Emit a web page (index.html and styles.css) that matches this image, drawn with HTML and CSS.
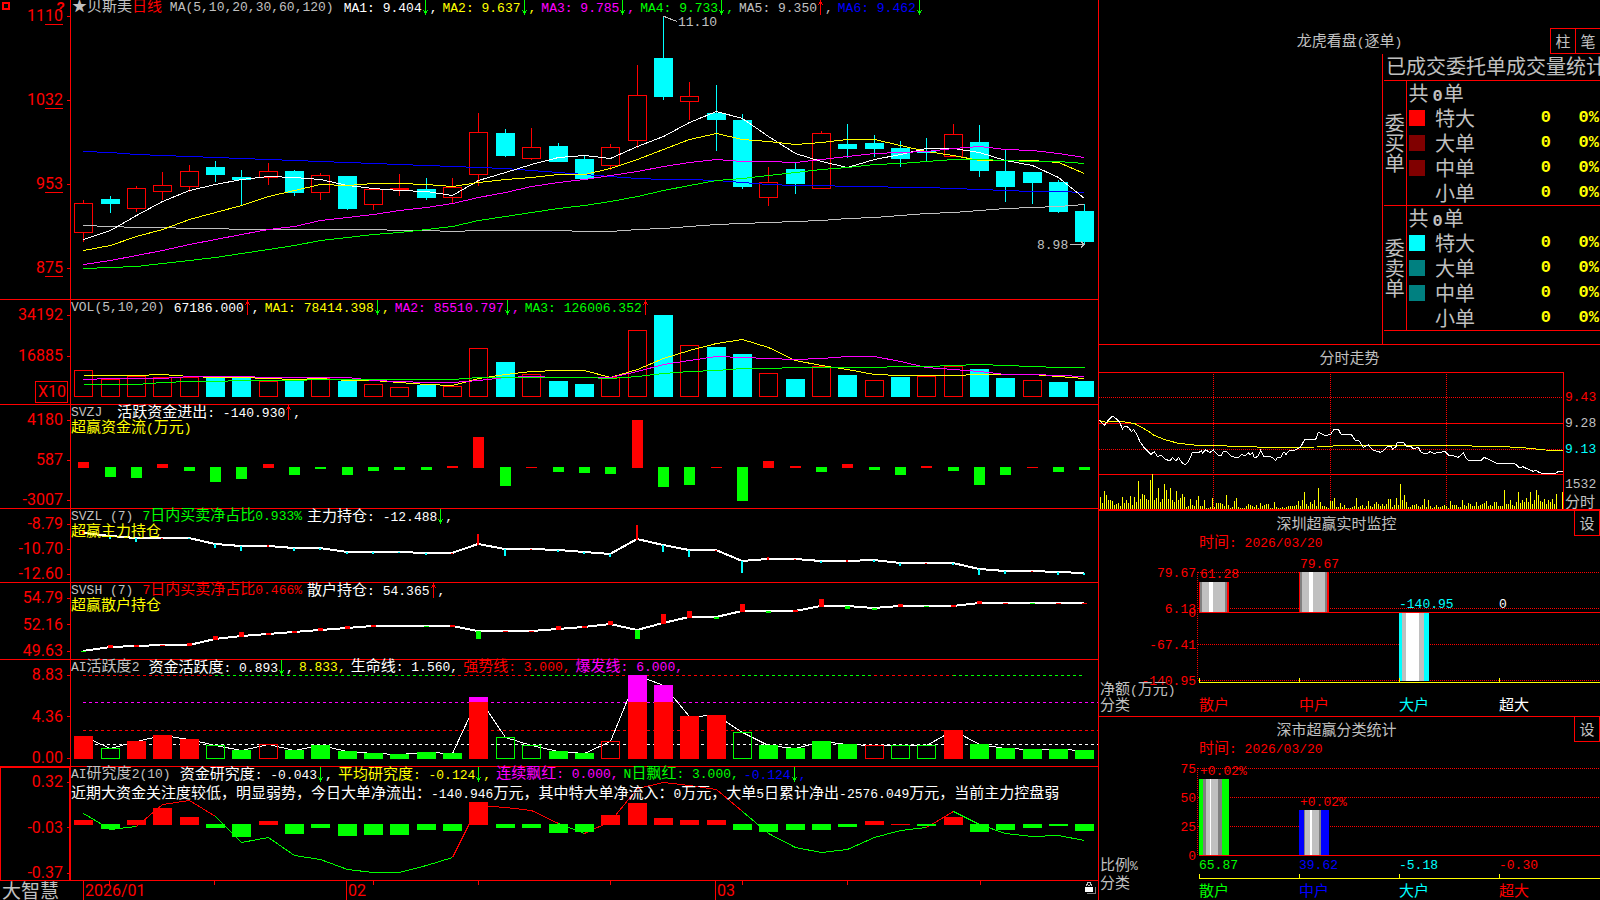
FILE: index.html
```html
<!DOCTYPE html>
<html lang="zh-CN">
<head>
<meta charset="utf-8">
<title>贝斯美 日线 - 大智慧</title>
<link rel="stylesheet" href="styles.css">
</head>
<body>
<svg class="defs" aria-hidden="true">
  <symbol id="up" viewBox="0 0 5 15"><path d="M2 0h1v15h-1zM1 2h3v2h-3zM0 4h1v1h-1zM4 4h1v1h-1z"/></symbol>
  <symbol id="down" viewBox="0 0 5 15"><path d="M2 0h1v15h-1zM1 11h3v2h-3zM0 10h1v1h-1zM4 10h1v1h-1z"/></symbol>
</svg>
<div class="screen">
  <main class="charts">
    <section class="panel">
      <div class="axis wide-end">
        <span class="mark"></span><span class="hint">?</span>
        <span class="lab"><span>11<u>10</u></span></span><span class="lab"><span>10<u>32</u></span></span><span class="lab"><span>9<u>53</u></span></span><span class="lab"><span>8<u>75</u></span></span>
      </div>
      <div class="plot">
        <svg id="kline" viewBox="71 0 1027 299" preserveAspectRatio="none"></svg>
        <div class="heads"><div class="head">
          <span class="silver name"><span class="zh">★贝斯美<span class="red">日线</span></span> MA(5,10,20,30,60,120)</span>
          <span class="white">MA1: 9.404<svg class="arr green"><use href="#down"/></svg>,</span>
          <span class="yellow">MA2: 9.637<svg class="arr green"><use href="#down"/></svg>,</span>
          <span class="magenta">MA3: 9.785<svg class="arr green"><use href="#down"/></svg>,</span>
          <span class="green">MA4: 9.733<svg class="arr green"><use href="#down"/></svg>,</span>
          <span class="silver">MA5: 9.350<svg class="arr red"><use href="#up"/></svg>,</span>
          <span class="blue">MA6: 9.462<svg class="arr green"><use href="#down"/></svg></span>
        </div></div>
      </div>
    </section>
    <section class="panel">
      <div class="axis vol">
        <span class="lab">34192</span><span class="lab">16885</span><span class="unit">X10</span>
      </div>
      <div class="plot">
        <svg id="volume" viewBox="71 300 1027 104" preserveAspectRatio="none"></svg>
        <div class="heads"><div class="head">
          <span class="silver title">VOL(5,10,20)</span>
          <span class="white">67186.000<svg class="arr red"><use href="#up"/></svg>,</span>
          <span class="yellow">MA1: 78414.398<svg class="arr green"><use href="#down"/></svg>,</span>
          <span class="magenta">MA2: 85510.797<svg class="arr green"><use href="#down"/></svg>,</span>
          <span class="green">MA3: 126006.352<svg class="arr red"><use href="#up"/></svg></span>
        </div></div>
      </div>
    </section>
    <section class="panel">
      <div class="axis"><span class="lab">4180</span><span class="lab">587</span><span class="lab">-3007</span></div>
      <div class="plot">
        <svg id="flow" viewBox="71 405 1027 103" preserveAspectRatio="none"></svg>
        <div class="heads"><div class="head">
          <span class="silver title gap">SVZJ</span>
          <span class="white"><span class="zh">活跃资金进出</span>: -140.930<svg class="arr red"><use href="#up"/></svg>,</span>
        </div>
        <div class="sub yellow"><span class="zh">超赢资金流</span>(<span class="zh">万元</span>)</div></div>
      </div>
    </section>
    <section class="panel">
      <div class="axis"><span class="lab">-8.79</span><span class="lab">-10.70</span><span class="lab">-12.60</span></div>
      <div class="plot">
        <svg id="main-hold" viewBox="71 509 1027 73" preserveAspectRatio="none"></svg>
        <div class="heads"><div class="head">
          <span class="silver title">SVZL (7)</span>
          <span class="green">7<span class="zh">日内买卖净占比</span>0.933%</span>
          <span class="white"><span class="zh">主力持仓</span>: -12.488<svg class="arr green"><use href="#down"/></svg>,</span>
        </div>
        <div class="sub yellow"><span class="zh">超赢主力持仓</span></div></div>
      </div>
    </section>
    <section class="panel">
      <div class="axis"><span class="lab">54.79</span><span class="lab">52.16</span><span class="lab">49.63</span></div>
      <div class="plot">
        <svg id="retail-hold" viewBox="71 583 1027 76" preserveAspectRatio="none"></svg>
        <div class="heads"><div class="head">
          <span class="silver title">SVSH (7)</span>
          <span class="red">7<span class="zh">日内买卖净占比</span>0.466%</span>
          <span class="white"><span class="zh">散户持仓</span>: 54.365<svg class="arr red"><use href="#up"/></svg>,</span>
        </div>
        <div class="sub yellow"><span class="zh">超赢散户持仓</span></div></div>
      </div>
    </section>
    <section class="panel">
      <div class="axis"><span class="lab">8.83</span><span class="lab">4.36</span><span class="lab">0.00</span></div>
      <div class="plot">
        <svg id="active" viewBox="71 660 1027 106" preserveAspectRatio="none"></svg>
        <div class="heads"><div class="head">
          <span class="silver title">AI<span class="zh">活跃度</span>2</span>
          <span class="white"><span class="zh">资金活跃度</span>: 0.893<svg class="arr green"><use href="#down"/></svg>,</span>
          <span class="yellow">8.833,</span>
          <span class="white"><span class="zh">生命线</span>: 1.560,</span>
          <span class="red"><span class="zh">强势线</span>: 3.000,</span>
          <span class="magenta"><span class="zh">爆发线</span>: 6.000,</span>
        </div></div>
      </div>
    </section>
    <section class="panel last">
      <div class="axis boxed"><span class="lab">0.32</span><span class="lab">-0.03</span><span class="lab">-0.37</span></div>
      <div class="plot">
        <svg id="research" viewBox="71 767 1027 113" preserveAspectRatio="none"></svg>
        <div class="heads"><div class="head">
          <span class="silver title">AI<span class="zh">研究度</span>2(10)</span>
          <span class="white"><span class="zh">资金研究度</span>: -0.043<svg class="arr green"><use href="#down"/></svg>,</span>
          <span class="yellow"><span class="zh">平均研究度</span>: -0.124<svg class="arr green"><use href="#down"/></svg>,</span>
          <span class="magenta"><span class="zh">连续飘红</span>: 0.000,</span>
          <span class="green">N<span class="zh">日飘红</span>: 3.000,</span>
          <span class="blue">-0.124<svg class="arr green"><use href="#down"/></svg>,</span>
        </div>
        <div class="sub note white"><span class="zh">近期大资金关注度较低，明显弱势，今日大单净流出：</span>-140.946<span class="zh">万元，其中特大单净流入：</span>0<span class="zh">万元，大单</span>5<span class="zh">日累计净出</span>-2576.049<span class="zh">万元，当前主力控盘弱</span></div></div>
      </div>
    </section>
    <footer class="timeline">
      <span class="brand">大智慧</span>
      <svg id="dates" viewBox="71 881 1027 19" preserveAspectRatio="none">
        <path class="s-red" d="M83.5 881v19M346.5 881v19M715.5 881v19M109.5 881v4M214.5 881v4M373.5 881v4M478.5 881v4M610.5 881v4M742.5 881v4M847.5 881v4M980.5 881v4"/>
        <text class="narrow" x="85" y="896">2026/01</text><text class="narrow" x="348" y="896">02</text><text class="narrow" x="717" y="896">03</text>
        <path class="f-gray" d="M1087 893h8v-6h1v7h-9z"/>
        <path class="f-white" d="M1085 887h8v5h-8z"/>
        <path class="s-silver" d="M1086.5 886v-2h1v-1.5h3v1.5h1v2M1088 885.500h2"/>
      </svg>
    </footer>
  </main>

  <aside class="side">
    <section class="orders">
      <header class="bar tall"><h2><span class="zh">龙虎看盘</span>(<span class="zh">逐单</span>)</h2><div class="btns"><button>柱</button><button>笔</button></div></header>
      <div class="book">
        <h3>已成交委托单成交量统计</h3>
        <table>
          <tbody>
            <tr><th rowspan="5" scope="rowgroup">委<br>买<br>单</th><td colspan="4" class="sum">共<b>0</b>单</td></tr>
            <tr><td><i class="sw c1"></i></td><td>特大</td><td class="num">0</td><td class="num">0%</td></tr>
            <tr><td><i class="sw c2"></i></td><td>大单</td><td class="num">0</td><td class="num">0%</td></tr>
            <tr><td><i class="sw c2"></i></td><td>中单</td><td class="num">0</td><td class="num">0%</td></tr>
            <tr><td></td><td>小单</td><td class="num">0</td><td class="num">0%</td></tr>
          </tbody>
          <tbody>
            <tr><th rowspan="5" scope="rowgroup">委<br>卖<br>单</th><td colspan="4" class="sum">共<b>0</b>单</td></tr>
            <tr><td><i class="sw c3"></i></td><td>特大</td><td class="num">0</td><td class="num">0%</td></tr>
            <tr><td><i class="sw c4"></i></td><td>大单</td><td class="num">0</td><td class="num">0%</td></tr>
            <tr><td><i class="sw c4"></i></td><td>中单</td><td class="num">0</td><td class="num">0%</td></tr>
            <tr><td></td><td>小单</td><td class="num">0</td><td class="num">0%</td></tr>
          </tbody>
        </table>
      </div>
    </section>

    <section class="intraday">
      <h2 class="zh">分时走势</h2>
      <div class="trend">
        <svg id="trend" viewBox="27 96 1395 411" preserveAspectRatio="none"></svg>
        <div class="scale"><span class="red">9.43</span><span>9.28</span><span class="cyan">9.13</span><span class="push">1532</span><span class="zh">分时</span></div>
      </div>
    </section>

    <section class="stat">
      <header class="bar"><h2 class="zh">深圳超赢实时监控</h2><button>设</button></header>
      <p class="time"><span class="zh">时间</span>: 2026/03/20</p>
      <svg viewBox="1099 552 501 164" preserveAspectRatio="none">
        <defs>
          <linearGradient id="g-red"><stop offset="3%" stop-color="red"/><stop offset="3%" stop-color="gray"/><stop offset="10%" stop-color="gray"/><stop offset="10%" stop-color="silver"/><stop offset="33%" stop-color="silver"/><stop offset="33%" stop-color="#fff"/><stop offset="47%" stop-color="#fff"/><stop offset="47%" stop-color="silver"/><stop offset="87%" stop-color="silver"/><stop offset="87%" stop-color="gray"/><stop offset="93%" stop-color="gray"/><stop offset="93%" stop-color="red"/></linearGradient>
          <linearGradient id="g-cyan"><stop offset="10%" stop-color="cyan"/><stop offset="10%" stop-color="silver"/><stop offset="23%" stop-color="silver"/><stop offset="23%" stop-color="#fff"/><stop offset="67%" stop-color="#fff"/><stop offset="67%" stop-color="silver"/><stop offset="83%" stop-color="silver"/><stop offset="83%" stop-color="cyan"/></linearGradient>
          <linearGradient id="g-green"><stop offset="13%" stop-color="lime"/><stop offset="13%" stop-color="gray"/><stop offset="23%" stop-color="gray"/><stop offset="23%" stop-color="silver"/><stop offset="37%" stop-color="silver"/><stop offset="37%" stop-color="#fff"/><stop offset="40%" stop-color="#fff"/><stop offset="40%" stop-color="silver"/><stop offset="63%" stop-color="silver"/><stop offset="63%" stop-color="gray"/><stop offset="77%" stop-color="gray"/><stop offset="77%" stop-color="lime"/></linearGradient>
          <linearGradient id="g-blue"><stop offset="17%" stop-color="blue"/><stop offset="17%" stop-color="gray"/><stop offset="20%" stop-color="gray"/><stop offset="20%" stop-color="silver"/><stop offset="37%" stop-color="silver"/><stop offset="37%" stop-color="#fff"/><stop offset="43%" stop-color="#fff"/><stop offset="43%" stop-color="silver"/><stop offset="67%" stop-color="silver"/><stop offset="67%" stop-color="gray"/><stop offset="73%" stop-color="gray"/><stop offset="73%" stop-color="blue"/></linearGradient>
        </defs>
        <path class="s-red dot" d="M1198 572.500h402M1198 608.500h402M1198 644.500h402M1198 680.500h402M1197.500 572v108"/>
        <rect fill="url(#g-red)" x="1199" y="582" width="30" height="30"/>
        <rect fill="url(#g-red)" x="1299" y="572" width="30" height="40"/>
        <rect fill="url(#g-cyan)" x="1399" y="613" width="30" height="68"/>
        <path class="s-red" d="M1199 612.500h401"/>
        <path class="s-yellow" d="M1199.500 678v4.500h400M1299.500 678v4M1399.500 678v4M1499.500 678v4"/>
        <g class="f-red end"><text x="1196" y="577">79.67</text><text x="1196" y="613">6.13</text><text x="1196" y="617">0</text><text x="1196" y="649">-67.41</text><text x="1196" y="685">-140.95</text></g>
        <text class="f-red" x="1200" y="578">61.28</text><text class="f-red" x="1300" y="568">79.67</text><text class="f-cyan" x="1399" y="608">-140.95</text><text class="f-white" x="1499" y="608">0</text>
        <g class="f-silver"><text x="1100" y="694"><tspan class="zh">净额</tspan>(<tspan class="zh">万元</tspan>)</text><text class="zh" x="1100" y="710">分类</text></g>
        <g class="zh"><text class="f-red" x="1199" y="710">散户</text><text class="f-red" x="1299" y="710">中户</text><text class="f-cyan" x="1399" y="710">大户</text><text class="f-white" x="1499" y="710">超大</text></g>
      </svg>
    </section>

    <section class="stat">
      <header class="bar"><h2 class="zh">深市超赢分类统计</h2><button>设</button></header>
      <p class="time"><span class="zh">时间</span>: 2026/03/20</p>
      <svg viewBox="1099 758 501 142" preserveAspectRatio="none">
        <path class="s-red dot" d="M1198 768.500h402M1198 797.500h402M1198 826.500h402M1197.500 768v87"/>
        <rect fill="url(#g-green)" x="1199" y="779" width="30" height="76"/>
        <rect fill="url(#g-blue)" x="1299" y="810" width="30" height="45"/>
        <path class="s-red" d="M1199 855.500h401"/>
        <path class="s-yellow" d="M1199.500 874v4.500h400M1299.500 874v4M1399.500 874v4M1499.500 874v4"/>
        <g class="f-red end"><text x="1196" y="773">75</text><text x="1196" y="802">50</text><text x="1196" y="831">25</text><text x="1196" y="860">0</text></g>
        <text class="f-red" x="1200" y="775">+0.02%</text><text class="f-red" x="1300" y="806">+0.02%</text>
        <text class="f-green" x="1199" y="869">65.87</text><text class="f-blue" x="1299" y="869">39.62</text><text class="f-cyan" x="1399" y="869">-5.18</text><text class="f-red" x="1499" y="869">-0.30</text>
        <g class="f-silver"><text x="1100" y="870"><tspan class="zh">比例</tspan>%</text><text class="zh" x="1100" y="888">分类</text></g>
        <g class="zh"><text class="f-green" x="1199" y="896">散户</text><text class="f-blue" x="1299" y="896">中户</text><text class="f-cyan" x="1399" y="896">大户</text><text class="f-red" x="1499" y="896">超大</text></g>
      </svg>
    </section>
  </aside>
</div>
<script src="charts.js"></script>
</body>
</html>
```

FILE: styles.css
```css
* { box-sizing: border-box; }
html, body { height: 100%; }
body {
  margin: 0;
  background: #000;
  color: silver;
  overflow: hidden;
  font: 13px/16px "Liberation Mono", "Noto Sans CJK SC", monospace;
}
h2, h3, p { margin: 0; font-size: inherit; font-weight: 400; }
svg { display: block; width: 100%; height: 100%; min-width: 0; min-height: 0; overflow: hidden; }
.defs { display: none; }
.zh { font-family: "Noto Sans CJK SC", sans-serif; font-size: 15px; line-height: 15px; }
.head .zh, .sub .zh, .time .zh { line-height: 0; }

.red { color: red; } .green { color: lime; } .yellow { color: yellow; }
.magenta { color: magenta; } .blue { color: blue; } .white { color: #fff; }
.silver { color: silver; } .cyan { color: cyan; }

.screen {
  height: 100%;
  display: grid;
  grid-template-columns: minmax(0, 1099fr) minmax(0, 501fr);
  grid-template-rows: minmax(0, 1fr);
}

/* left: stacked indicator panels */
.charts {
  display: grid;
  min-height: 0;
  grid-template-rows:
    minmax(0, 300fr) minmax(0, 105fr) minmax(0, 104fr) minmax(0, 74fr)
    minmax(0, 77fr) minmax(0, 107fr) minmax(0, 114fr) minmax(0, 19fr);
  border-right: 1px solid red;
}
.panel { display: grid; grid-template-columns: 71px minmax(0, 1fr); grid-template-rows: minmax(0, 1fr); border-bottom: 1px solid red; }
.panel.last { border-bottom: 0; }
.panel.last .plot { border-bottom: 1px solid red; }
.axis {
  display: flex;
  flex-direction: column;
  justify-content: space-between;
  align-items: flex-end;
  padding-top: 7px;
  border-right: 1px solid red;
  color: red;
  position: relative;
}
.axis.wide-end { padding-bottom: 23px; padding-top: 8px; }
.axis.boxed { box-shadow: inset 1px 1px red, inset -1px -1px red; }
.lab, .unit, .narrow { font: 16px/16px Roboto, "Liberation Sans", sans-serif; }
.lab { display: flex; align-items: center; gap: 4px; }
.lab::after { content: ""; width: 3px; height: 1px; background: red; }
.lab u { text-decoration-thickness: 1px; text-underline-offset: 3px; text-decoration-skip-ink: none; }
.vol .lab:first-child { margin-bottom: 25px; }
.unit { margin: auto 2px 1px 0; padding: 1px 1px 1px 2px; border: 1px solid red; line-height: 18px; }
.mark { position: absolute; left: 2px; top: 2px; width: 8px; height: 8px; border: 2px solid red; }
.hint { position: absolute; right: 5px; top: 0; font-weight: 700; font-size: 14px; }

.plot { display: grid; grid-template-columns: minmax(0, 1fr); grid-template-rows: minmax(0, 1fr); min-width: 0; }
.plot > * { grid-area: 1 / 1; }
.heads { white-space: nowrap; }
.head { display: flex; gap: 5px; height: 16px; line-height: 16px; }
.head .name { margin: 0 5px 0 1px; }
.head .title { margin-right: 4px; }
.head .gap { margin-right: 10px; }
.sub { line-height: 15px; height: 15px; }
.note { margin-top: 4px; }
.arr { display: inline-block; width: 5px; height: 15px; margin: 0 2px 0 1px; vertical-align: -3px; fill: currentColor; shape-rendering: crispEdges; }

.timeline { display: grid; grid-template-columns: 71px minmax(0, 1fr); grid-template-rows: minmax(0, 1fr); }
.brand { font: 19px/18px "Noto Sans CJK SC", sans-serif; padding-left: 2px; white-space: nowrap; }

/* chart paint */
path, rect, line, polyline { shape-rendering: crispEdges; vector-effect: non-scaling-stroke; fill: none; }
rect[fill] { fill: revert-layer; }
.arr path, symbol path { fill: inherit; }
.s-red { stroke: red; } .s-cyan { stroke: cyan; } .s-green { stroke: lime; } .s-white { stroke: #fff; }
.s-yellow { stroke: yellow; } .s-magenta { stroke: magenta; } .s-silver { stroke: silver; } .s-blue { stroke: blue; }
.f-red { fill: red; } .f-cyan { fill: cyan; } .f-green { fill: lime; } .f-white { fill: #fff; }
.f-yellow { fill: yellow; } .f-magenta { fill: magenta; } .f-silver { fill: silver; } .f-blue { fill: blue; }
.f-gray { fill: gray; }
.thick { stroke-width: 2px; }
.dot { stroke-dasharray: 1 1; }
.dash { stroke-dasharray: 3 3; }
.end { text-anchor: end; }
.narrow { fill: red; }

/* right: order statistics */
.side {
  display: grid;
  min-width: 0;
  overflow: hidden;
  grid-template-columns: minmax(0, 1fr);
  grid-template-rows: minmax(0, 345fr) minmax(0, 166fr) minmax(0, 206fr) minmax(0, 183fr);
}
.side section { min-width: 0; min-height: 0; }
.orders { display: flex; flex-direction: column; padding-top: 28px; border-bottom: 1px solid red; overflow: hidden; }
.bar { display: flex; justify-content: center; align-items: center; height: 25px; }
.bar h2 { flex: 1; text-align: center; }
.bar.tall { position: relative; height: 26px; flex: none; }
.btns { position: absolute; right: -1px; top: 0; display: flex; }
button {
  width: 26px; height: 26px; padding: 0;
  background: #000; color: silver; border: 1px solid red;
  font: 15px/22px "Noto Sans CJK SC", sans-serif;
}
.btns button + button { margin-left: -1px; }
.book { flex: 1; align-self: flex-end; width: 218px; border-left: 1px solid red; padding-left: 1px; overflow: hidden; }
.book h3 { font: 20px/24px "Noto Sans CJK SC", sans-serif; height: 26px; padding-left: 2px; white-space: nowrap; }
table { width: 100%; border-collapse: collapse; table-layout: auto; font: 20px/24px "Noto Sans CJK SC", sans-serif; border-top: 1px solid red; }
tbody { border-bottom: 1px solid red; }
tr { height: 25px; }
td, th { padding: 0; font-weight: 400; line-height: 22px; height: 25px; }
th { width: 22px; border-right: 1px solid red; line-height: 20px; }
td:nth-child(1):not(.sum) { width: 29px; }
.sum { padding-left: 2px; }
.sum b, .num { font: 700 17px/22px "Liberation Mono", monospace; }
.sum b { margin: 0 1px 0 4px; line-height: 0; }
.num { color: yellow; text-align: right; }
.num:last-child { width: 49px; padding-right: 1px; }
.sw { display: block; width: 16px; height: 16px; margin-left: 2px; }
.c1 { background: red; } .c2 { background: maroon; } .c3 { background: cyan; } .c4 { background: teal; }

.intraday { display: flex; flex-direction: column; border-bottom: 2px solid red; }
.intraday h2 { text-align: center; line-height: 23px; height: 27px; }
.trend { flex: 1; min-height: 0; display: grid; grid-template-columns: minmax(0, 1fr) 36px; grid-template-rows: minmax(0, 1fr); }
.scale { display: flex; flex-direction: column; gap: 10px; padding: 18px 0 0 1px; overflow: hidden; }
.scale .push { margin: auto 0 -10px; }
.scale .zh { line-height: 16px; }

.stat { display: flex; flex-direction: column; border-bottom: 1px solid red; }
.stat:last-child { border-bottom: 0; }
.stat h2 { line-height: 23px; height: 25px; }
.stat button { height: 25px; border-top: 0; }
.stat > svg { flex: 1; }
.time { color: red; padding-left: 100px; height: 16px; }
```

FILE: charts.js
```js
const NS = 'http://www.w3.org/2000/svg';
const px = i => Math.round(83.3 + 26.345 * i);

function add(svg, tag, cls, attrs) {
  const el = document.createElementNS(NS, tag);
  el.setAttribute('class', cls);
  for (const k in attrs) el.setAttribute(k, attrs[k]);
  svg.appendChild(el);
  return el;
}
const box = (svg, cls, x, y, width, height) => add(svg, 'rect', cls, { x, y, width, height });
const hollow = (svg, cls, x, y, w, h) => box(svg, cls, x + 0.5, y + 0.5, w - 1, Math.max(h - 1, 1));
const path = (svg, cls, d) => add(svg, 'path', cls, { d });
const line = (svg, cls, ys, from = 0, to = ys.length - 1, off = 0.5) =>
  path(svg, cls, 'M' + ys.slice(from, to + 1).map((y, k) => (px(from + k) + off) + ' ' + (y + off)).join('L'));
function label(svg, cls, x, y, text) { add(svg, 'text', cls, { x, y }).textContent = text; }
const $ = id => document.getElementById(id);

/* daily candles: kind, high, top, bottom, low */
const candles = [
  ['r',200,203,233,242],['c',196,199,204,213],['r',186,188,209,212],['r',172,185,192,200],['r',165,171,187,192],
  ['c',161,167,175,182],['c',170,177,180,205],['r',163,171,178,185],['c',170,171,193,196],['r',173,175,193,200],
  ['c',176,176,209,210],['r',188,189,205,210],['r',174,188,190,196],['c',178,189,198,200],['r',178,187,198,203],
  ['r',113,132,175,186],['c',129,133,156,157],['r',128,147,159,160],['c',143,146,162,162],['c',155,159,179,179],
  ['r',144,147,166,170],['r',65,95,141,148],['c',16,58,97,100],['r',82,96,102,120],['c',85,113,120,151],
  ['c',114,120,187,189],['r',167,182,198,206],['c',163,169,184,194],['r',131,133,189,189],['c',124,144,149,158],
  ['c',135,143,149,157],['c',141,148,159,167],['c',138,151,153,162],['r',124,134,157,157],['c',125,142,171,177],
  ['c',149,171,187,202],['c',172,172,183,204],['c',180,182,212,213],['c',204,211,242,244]
];
const k = $('kline');
candles.forEach(([t, hi, top, bot, lo], i) => {
  const x = px(i);
  if (t === 'c') {
    box(k, 'f-cyan', x - 9, top, 19, bot - top);
    box(k, 'f-cyan', x, hi, 1, lo - hi);
  } else {
    hollow(k, 's-red', x - 9, top, 19, bot - top);
    box(k, 'f-red', x, hi, 1, top - hi);
    box(k, 'f-red', x, bot, 1, lo - bot);
  }
});
line(k, 's-silver', [225,226,227,227,228,228,229,229,229,229,229,229,230,230,231,230,230,230,230,231,231,229,228,226,224,223,222,221,220,218,217,215,213,212,210,208,207,206,204]);
line(k, 's-blue', [151,152,154,155,156,157,158,159,160,161,162,163,164,165,166,167,168,170,172,174,176,178,179,179,180,182,184,185,185,186,186,187,187,188,189,190,191,191,192]);
line(k, 's-white', [239,230,215,201,190,184,179,176,177,179,185,188,190,191,195,180,172,164,157,155,158,146,136,122,111,118,136,153,161,167,159,154,148,148,152,160,165,177,198]);
line(k, 's-yellow', [250,245,236,229,219,212,205,196,190,184,185,183,183,184,186,182,179,177,174,174,168,159,149,139,133,139,141,144,142,139,139,145,151,155,160,160,160,162,173]);
line(k, 's-magenta', [264,260,255,250,244,239,234,229,226,220,217,214,210,207,203,197,192,186,182,179,175,171,166,162,159,161,161,162,159,156,153,152,151,148,146,149,150,153,157]);
line(k, 's-green', [268,267,266,263,260,257,253,249,245,240,237,234,232,229,226,220,216,212,208,205,201,196,190,185,180,178,175,172,169,167,164,163,161,159,159,160,161,161,163]);
path(k, 's-silver', 'M663.5 16.500L677.5 21.500M663 16.500h3M1070 244.500h14M1081 241.500l3 3l-3 3');
label(k, 'f-silver', 678, 26, '11.10');
label(k, 'f-silver', 1037, 249, '8.98');

/* volume */
const v = $('volume');
const volTop = [370,379,376,377,377,377,377,381,380,378,381,384,387,385,386,348,362,374,381,384,377,330,315,345,347,354,373,379,366,375,380,377,376,366,369,378,380,382,381];
const volKind = 'rrrrrccrcrcrrcrrcrccrrcrccrcrcrcrrccrcc';
volTop.forEach((y, i) => volKind[i] === 'c'
  ? box(v, 'f-cyan', px(i) - 9, y, 19, 397 - y)
  : hollow(v, 's-red', px(i) - 9, y, 19, 397 - y));
line(v, 's-yellow', [375,375,375,374,376,377,377,378,379,378,380,380,382,384,385,378,374,371,370,370,377,369,358,350,343,339,347,360,365,369,374,375,375,375,374,374,374,376,378]);
line(v, 's-magenta', [379,378,378,378,376,376,376,377,377,377,377,380,381,382,382,380,377,376,377,377,377,371,364,360,356,357,358,359,358,356,356,361,367,369,371,374,374,375,376]);
line(v, 's-green', [384,384,384,382,381,381,380,380,380,379,379,379,379,379,379,377,377,377,377,377,378,376,373,371,370,368,368,367,367,367,367,366,366,365,364,365,366,367,367]);

/* money flow */
[6,-10,-11,4,-4,-15,-12,4,-8,-2,-8,-4,-3,-3,2,31,-19,1,-5,-6,-7,48,-20,-18,1,-34,7,2,-5,4,-3,-8,2,-4,-18,-8,1,-5,-3]
  .forEach((h, i) => h > 0
    ? box($('flow'), 'f-red', px(i) - 5, 468 - h, 11, h)
    : box($('flow'), 'f-green', px(i) - 5, 467, 11, -h));

/* holdings: thick line with daily change ticks */
function holdings(svg, ys, ticks, down, width) {
  line(svg, 's-white thick', ys, 0, ys.length - 1, 0);
  ticks.forEach((h, i) => {
    const x = px(i) - Math.floor(width / 2);
    if (h > 0) box(svg, 'f-red', x, ys[i] - h + 1, width, h);
    if (h < 0) box(svg, down, x, ys[i], width, -h);
  });
}
holdings($('main-hold'),
  [533,536,538,538,538,544,546,546,548,548,552,552,552,553,553,544,549,549,550,552,554,539,545,550,550,561,559,559,561,561,560,563,563,563,569,571,571,572,573],
  [3,-3,-4,1,-1,-4,-5,2,-3,-2,-2,-2,-1,-2,1,11,-7,1,-2,-2,-3,15,-7,-7,1,-12,3,1,-2,2,-2,-3,1,-2,-6,-3,1,-3,-2], 'f-cyan', 2);
holdings($('retail-hold'),
  [651,647,646,645,645,639,636,634,632,630,628,626,626,626,626,631,631,631,629,627,624,630,623,617,617,611,611,611,606,606,608,606,606,606,603,603,603,603,603],
  [-1,3,2,1,3,4,5,2,2,3,3,2,0,-1,2,-8,1,1,4,2,4,-9,10,7,-2,8,-2,2,8,-3,-2,3,-1,2,3,1,-1,1,1], 'f-green', 5);

/* activity: R/G solid, r/g outlined */
const a = $('active');
const actTop = [736,748,741,735,739,745,750,744,750,745,751,753,754,752,753,697,737,745,751,753,741,675,685,716,715,732,745,748,741,744,745,745,745,730,744,748,749,749,750];
const actKind = 'RgRRRgGrGGGGGGGRggGGrRRRRgGGGGrggRGGGGG';
let from = 83;
[[5,'red'],[14,'green'],[17,'red'],[20,'green'],[25,'red'],[30,'green'],[33,'red'],[38,'green']].forEach(([i, c]) => {
  path(a, 's-' + c + ' dash', `M${from} 675.500H${px(i)}`);
  from = px(i);
});
path(a, 's-magenta dash', 'M83 702.500H1098');
path(a, 's-red dash', 'M83 730.500H1098');
path(a, 's-white dash', 'M83 744.500H1098');
line(a, 's-white', actTop);
actTop.forEach((y, i) => {
  const t = actKind[i], c = t.toLowerCase() === 'r' ? 'red' : 'green';
  if (t === 'r' || t === 'g') return hollow(a, 's-' + c, px(i) - 9, y, 19, 759 - y);
  box(a, 'f-' + c, px(i) - 9, y, 19, 759 - y);
  if (y < 702) box(a, 'f-magenta', px(i) - 9, y, 19, 702 - y);
});

/* research */
const r = $('research');
const res = [813,829,826,804,800,816,842,837,855,859,869,872,872,865,857,805,807,810,823,833,821,788,782,785,789,811,833,847,852,849,837,830,827,811,824,833,836,835,840];
[[0,2,'green'],[2,5,'red'],[5,14,'green'],[14,18,'red'],[18,19,'green'],[19,25,'red'],[25,32,'green'],[32,33,'red'],[33,38,'green']]
  .forEach(([s, e, c]) => line(r, 's-' + c, res, s, e));
[5,-5,5,17,8,-4,-13,4,-10,-4,-12,-11,-11,-6,-7,23,-4,-4,-9,-8,10,22,7,5,5,-6,-8,-6,-6,-3,4,1,-2,8,-8,-6,-4,-2,-7]
  .forEach((h, i) => h > 0
    ? box(r, 'f-red', px(i) - 9, 825 - h, 19, h)
    : box(r, 'f-green', px(i) - 9, 824, 19, -h));

/* intraday trend, drawn in thirds of a pixel */
const t = $('trend');
path(t, 's-red dot', 'M27 172.500H1419M27 328.500H1419M370.500 97V507M721.500 97V507M1069.500 97V507');
path(t, 's-red', 'M27 97.500H1420.500V508M27 250.500H1420M27 403.500H1420');
[12,6,18,14,9,9,8,4,5,6,3,12,6,9,6,13,4,12,7,28,10,15,14,10,9,29,35,9,11,21,7,10,25,19,10,21,9,7,18,9,11,15,12,2,3,10,4,3,9,13,
 3,3,9,1,1,2,11,2,6,6,6,5,3,14,4,1,2,8,11,2,1,1,1,3,5,4,3,2,4,1,6,3,4,5,5,1,1,7,2,1,1,2,1,2,3,3,3,3,4,8,
 3,9,17,5,3,7,5,9,3,21,7,3,3,2,1,8,8,11,2,2,6,2,4,1,1,1,2,3,11,2,3,4,1,3,8,3,2,5,7,5,3,5,3,5,10,10,2,4,11,4,
 25,9,14,7,2,2,4,4,5,3,2,4,10,2,9,3,1,2,4,2,2,3,4,3,1,8,4,4,4,2,2,9,4,3,6,5,3,3,7,3,4,5,6,8,3,4,3,7,7,3,
 3,3,19,5,5,9,4,3,7,17,6,9,7,11,7,17,5,9,19,14,8,7,10,5,9,7,10,5,15,0,0,17]
  .forEach((h, i) => box(t, 'f-yellow', 30 + 6 * i, 507 - 3 * h, 3, 3 * h));
path(t, 's-yellow', 'M27 242L50 247 62 243 100 245 135 251 165 268 180 277 190 285 225 299 265 310 320 316 410 318 530 322 680 321 745 317 850 316 1070 317 1220 319 1300 323 1365 330 1418 331');
path(t, 's-white', 'M27 240L35 247 43 256 55 240 67 228 80 237 90 248 97 267 105 258 115 262 125 275 130 268 140 283 150 305 162 322 172 332 183 343 193 335 203 350 213 345 225 357 240 363 247 352 258 363 265 352 275 367 285 374 295 365 307 338 325 338 335 332 337 340 347 330 360 337 370 330 385 347 393 348 400 335 410 335 425 350 445 353 455 343 465 348 475 338 480 345 487 338 493 353 503 350 512 331 520 348 532 348 548 352 557 362 562 353 572 352 582 335 588 343 600 330 607 333 615 330 632 321 643 300 677 298 685 277 705 287 722 283 732 268 745 268 753 283 785 285 795 300 808 303 820 322 835 315 848 330 862 334 872 337 882 331 892 320 903 318 908 328 918 320 922 307 940 307 950 320 962 318 970 326 985 322 993 337 1010 342 1020 335 1032 341 1045 337 1065 335 1075 345 1088 347 1105 352 1120 338 1130 357 1140 363 1150 360 1172 362 1182 352 1205 362 1220 370 1240 370 1252 372 1265 370 1278 373 1288 384 1298 380 1315 388 1330 394 1338 390 1348 398 1362 401 1395 401 1405 394 1418 394');
```
